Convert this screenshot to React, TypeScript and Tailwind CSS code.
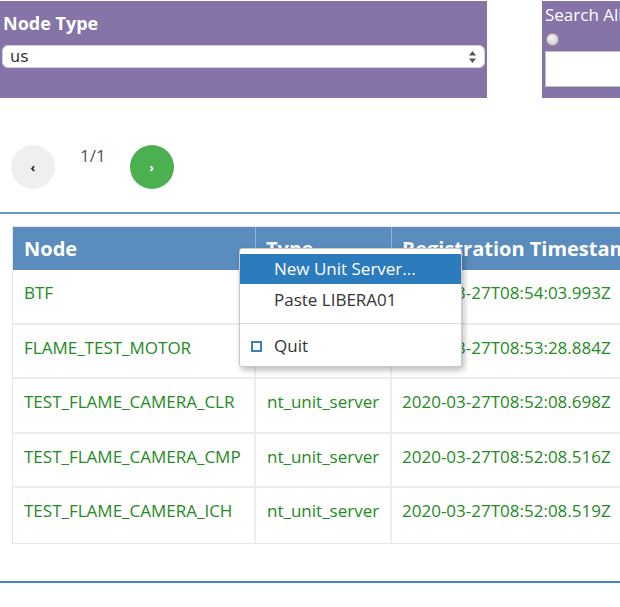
import React from 'react';

type Row = { node: string; type: string; ts: string };

const rows: Row[] = [
  { node: 'BTF', type: 'nt_unit_server', ts: '2020-03-27T08:54:03.993Z' },
  { node: 'FLAME_TEST_MOTOR', type: 'nt_unit_server', ts: '2020-03-27T08:53:28.884Z' },
  { node: 'TEST_FLAME_CAMERA_CLR', type: 'nt_unit_server', ts: '2020-03-27T08:52:08.698Z' },
  { node: 'TEST_FLAME_CAMERA_CMP', type: 'nt_unit_server', ts: '2020-03-27T08:52:08.516Z' },
  { node: 'TEST_FLAME_CAMERA_ICH', type: 'nt_unit_server', ts: '2020-03-27T08:52:08.519Z' },
];

const rowHeights = ['h-[55px]', 'h-[54px]', 'h-[55px]', 'h-[54px]', 'h-[55px]'];

const SelectArrows = () => (
  <svg width="9" height="14" viewBox="0 0 9 14" className="mr-[7px]">
    <path d="M4.5 1 L8 5.5 L1 5.5 Z" fill="#555" />
    <path d="M4.5 13 L8 8.5 L1 8.5 Z" fill="#555" />
  </svg>
);

const ContextMenu = () => (
  <div className="absolute left-[239px] top-[248px] w-[223px] bg-white border border-[#c9c9c9] rounded-[3px] shadow-[2px_3px_6px_rgba(0,0,0,0.28)] py-[5px] text-[17px]">
    <div className="h-[30px] bg-[#2b7bbd] text-white pl-[34px] flex items-center">New Unit Server...</div>
    <div className="h-[31px] text-[#333] pl-[34px] flex items-center">Paste LIBERA01</div>
    <div className="mt-[8px] mb-[7px] border-t border-[#dcdcdc]" />
    <div className="h-[30px] text-[#333] pl-[11px] flex items-center">
      <span className="w-[11px] h-[11px] border-2 border-[#3b7fc0] mr-[12px]" />
      Quit
    </div>
  </div>
);

export default function App() {
  return (
    <div className="relative w-[620px] h-[607px] overflow-hidden bg-white font-['Open_Sans',sans-serif]">
      {/* filter panels */}
      <div className="flex pt-px">
        <div className="w-[487px] h-[97px] shrink-0 bg-[#8673a7] px-[2px] pt-[10px]">
          <h2 className="pl-px text-[18px] leading-[24px] font-bold text-white">Node Type</h2>
          <div className="mt-[10px] h-[23px] w-[483px] rounded-[6px] bg-white border border-[#d4d0dc] flex items-center justify-between pl-[7px]">
            <span className="font-['DejaVu_Sans',sans-serif] text-[16px] text-[#333]">us</span>
            <SelectArrows />
          </div>
        </div>
        <div className="ml-[55px] w-[120px] h-[97px] shrink-0 bg-[#8673a7] pl-[3px] pt-[3px]">
          <div className="text-[17px] leading-[22px] text-white whitespace-nowrap">Search All</div>
          <div className="mt-[7px] ml-[1px] w-[13px] h-[13px] rounded-full border border-[#9a9a9a] bg-[radial-gradient(circle_at_40%_35%,#f6f6f6,#c2c2c2)]" />
          <div className="mt-[5px] h-[36px] w-[100px] bg-white border border-[#bfbfbf]" />
        </div>
      </div>

      {/* pagination */}
      <div className="mt-[47px] flex items-start">
        <button className="ml-[11px] w-11 h-11 rounded-full bg-[#efefef] flex items-center justify-center text-[13px] font-bold text-[#222] leading-none">
          ‹
        </button>
        <span className="ml-[25px] text-[17px] leading-[22px] text-[#555]">1/1</span>
        <button className="ml-[24px] w-11 h-11 rounded-full bg-[#4caf50] flex items-center justify-center text-[13px] font-bold text-white leading-none">
          ›
        </button>
      </div>

      <div className="mt-[23px] border-t-2 border-[#6b98c6]" />

      {/* table */}
      <div className="mt-[12px] ml-[12px] w-[700px] border border-[#e6e6e6] border-r-0">
        <div className="grid grid-cols-[243px_136px_1fr] h-[43px] bg-[#5a8cbe] text-white text-[20px] font-bold leading-[26px]">
          <div className="pl-[11px] pt-[9px] border-r border-[#8fb2d6]">Node</div>
          <div className="pl-[10px] pt-[9px] border-r border-[#8fb2d6]">Type</div>
          <div className="pl-[10px] pt-[9px] whitespace-nowrap">Registration Timestamp</div>
        </div>
        {rows.map((r, i) => (
          <div
            key={r.node}
            className={`grid grid-cols-[243px_136px_1fr] ${rowHeights[i]} text-[17px] leading-[23px] text-[#238b23] ${
              i < rows.length - 1 ? 'border-b-2 border-[#ededed]' : ''
            }`}
          >
            <div className="pl-[11px] pt-[11px] border-r-2 border-[#ededed] whitespace-nowrap">{r.node}</div>
            <div className="pl-[11px] pt-[11px] border-r-2 border-[#ededed] whitespace-nowrap">{r.type}</div>
            <div className="pl-[10px] pt-[11px] whitespace-nowrap">{r.ts}</div>
          </div>
        ))}
      </div>

      <div className="mt-[37px] border-t-2 border-[#4683c3]" />

      <ContextMenu />
    </div>
  );
}
